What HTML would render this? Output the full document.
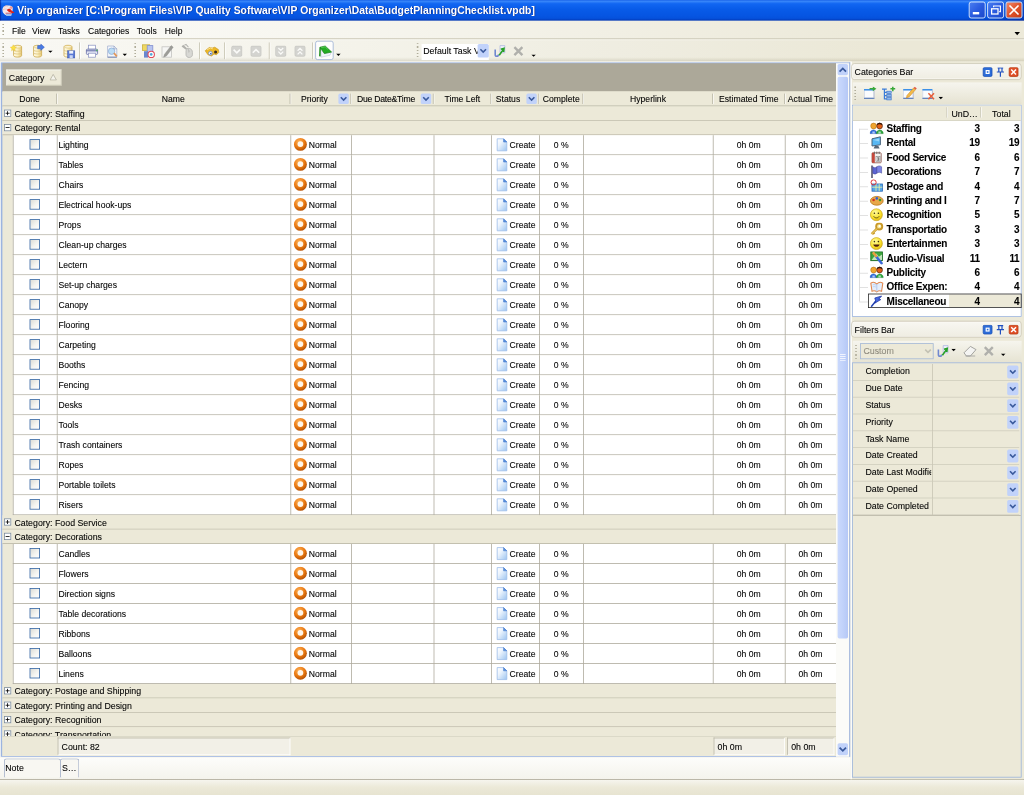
<!DOCTYPE html><html><head><meta charset="utf-8"><title>Vip organizer</title><style>
html,body{margin:0;padding:0;}
body{width:1024px;height:795px;overflow:hidden;background:#ece9d8;font-family:"Liberation Sans",sans-serif;}
#root{filter:blur(0.4px);-webkit-text-stroke:0.2px rgba(0,0,0,.5);position:absolute;left:0;top:0;width:1280px;height:994px;transform:scale(0.8);transform-origin:0 0;background:#ece9d8;font-size:11px;color:#000;overflow:hidden;}
.a{position:absolute;}
.t{position:absolute;white-space:nowrap;line-height:14px;height:14px;}
#title{left:0;top:0;width:1280px;height:26px;background:linear-gradient(to right,rgba(0,20,130,.55) 0,rgba(0,20,130,.5) 1px,rgba(0,0,0,0) 2px,rgba(0,0,0,0) 1240px,rgba(0,20,120,.35) 1280px),linear-gradient(to bottom,#1c66ea 0%,#3584f9 7%,#1166f2 18%,#085be8 45%,#0655e2 75%,#0551dc 88%,#0236b4 100%);}
#title .t{-webkit-text-stroke:0;left:21.500px;top:4px;font-weight:bold;font-size:13px;color:#fff;line-height:18px;height:18px;text-shadow:1px 1px 0 #0a2a8a;letter-spacing:0.02px;}
.wb{position:absolute;top:2px;width:19px;height:19px;border:1px solid #fff;border-radius:3px;background:linear-gradient(135deg,#4a7df0 0%,#2a5be0 50%,#1c48c8 100%);}
.wb.c{background:linear-gradient(135deg,#f08a6a 0%,#e0532c 50%,#c43a14 100%);}
#menu{left:0;top:26px;width:1280px;height:22.500px;background:linear-gradient(to right,#fbfbf8 0%,#f6f5ee 35%,#f1efe4 60%,#ece9d9 85%);border-bottom:1px solid #c5c2b2;box-sizing:border-box;}
#menu .t{top:4.500px;font-size:10.700px;}
#tb{left:0;top:48.500px;width:1280px;height:28.500px;background:linear-gradient(to bottom,rgba(255,255,255,.6) 0,rgba(255,255,255,0) 2px,rgba(0,0,0,0) 80%,rgba(120,110,70,.12) 93%,rgba(120,110,70,.22) 100%),linear-gradient(to right,#f9f8f4 0%,#f4f3ea 35%,#efede1 60%,#ebe8d7 85%);}
.grip{position:absolute;width:2px;background:repeating-linear-gradient(to bottom,#b0ad9a 0,#b0ad9a 1.5px,transparent 1.5px,transparent 4px);}
.sep{position:absolute;width:1px;background:#c5c2b0;box-shadow:1px 0 0 #fff;}
.row{position:absolute;left:16px;width:1029px;height:25px;background:#fff;}
.row i{position:absolute;top:0;width:1px;height:25px;background:#aeab9d;}
.row b{position:absolute;left:0;right:0;bottom:0;height:1px;background:#aeab9d;}
.row .t{top:5px;font-weight:normal;font-size:10.800px;}
.cb{position:absolute;left:21px;top:5px;width:11px;height:11px;border:1px solid #2f62a0;background:linear-gradient(135deg,#dcdcd6 0%,#f4f4f0 55%,#fff 100%);}
.pi{position:absolute;left:350.500px;top:3px;width:17px;height:17px;}
.si{position:absolute;left:603.500px;top:3px;width:15px;height:18px;}
.grp{position:absolute;left:3px;width:1042px;height:18px;background:#ece9d8;border-bottom:1px solid #b9b6a6;box-sizing:border-box;}
.grp .t{left:15px;top:2px;}
.pm{position:absolute;left:1.700px;top:4px;width:7px;height:7px;border:1px solid #7b8a99;background:#fff;}
.pm:before{content:"";position:absolute;left:1px;top:3px;width:5px;height:1px;background:#000;}
.pm.p:after{content:"";position:absolute;left:3px;top:1px;width:1px;height:5px;background:#000;}
.hd{position:absolute;left:3px;top:114px;width:1042px;height:19px;background:#ece9d8;border-bottom:1px solid #aaa798;box-sizing:border-box;}
.hd .t{top:3px;font-size:10.800px;}
.hd i{position:absolute;top:3px;width:1px;height:13px;background:#bab7a6;box-shadow:1px 0 0 #fff;}
.fb{position:absolute;top:3px;width:13px;height:13px;background:#c1d2fa;border-radius:2px;}
.fb svg,.cbx svg{position:absolute;left:0;top:0;}
.cbx{position:absolute;width:14px;height:17px;background:#c1d2fa;border-radius:2px;}
.ptitle{position:absolute;left:1065.500px;width:212.500px;height:21px;border:1px solid #cbc8b7;border-radius:4px;background:linear-gradient(to bottom,#f8f7f2,#efede2);box-sizing:border-box;box-shadow:inset 0 0 0 1px #fbfaf6;}
.ptitle .t{left:3px;top:3.200px;}
.cat{position:absolute;left:0;width:208px;height:18px;}
.cat .t{font-weight:bold;font-size:12.5px;top:2px;line-height:15px;letter-spacing:-0.35px;}
.cat .n{left:42.500px;}
.cat .u{right:49px;}
.cat .o{right:-0.500px;}
.cat svg{position:absolute;left:21px;top:0.500px;}
.cat em{position:absolute;left:8px;top:9px;width:11px;height:1px;background:#dadada;}
.fr{position:absolute;left:0;width:208px;height:21px;border-bottom:1px solid #d0cdbd;box-sizing:border-box;}
.fr .t{left:16px;top:2.600px;}
.fr i{position:absolute;left:99px;top:0;width:1px;height:21px;background:#c8c5b4;}
</style></head><body><div id="root"><div id="title" class="a"><div class="t">Vip organizer [C:\Program Files\VIP Quality Software\VIP Organizer\Data\BudgetPlanningChecklist.vpdb]</div><svg class="a" style="left:2px;top:4px" width="18" height="18" viewBox="0 0 18 18"><path d="M1 8c0-4 4-6 7-5 3-1 6 1 6 4l-1 6c-2 3-7 3-9 1-2-1-3-3-3-6z" fill="#f2e6ea"/><path d="M3 5c2-2 4-2 5-1M2 8c2-1 4-1 5 0" stroke="#e8b8b8" stroke-width="1" fill="none"/><path d="M5 13h8l-1 3H6z" fill="#9cc0f0"/><path d="M5 12.500h8" stroke="#d04848" stroke-width="1"/><path d="M6.500 8.500c2-2.500 4.500-2 6 0.500l3.500 2.500c-1.500 1-3 1-4.500 0-2 0-3.500-1-5-3z" fill="#e02418"/><circle cx="12" cy="5.500" r="1.800" fill="#f09898"/></svg><div class="wb" style="left:1211px"><div class="a" style="left:4px;top:12px;width:8px;height:3px;background:#fff"></div></div><div class="wb" style="left:1234px"><svg width="19" height="19" viewBox="0 0 19 19"><rect x="4.5" y="8" width="8" height="6.5" fill="none" stroke="#fff" stroke-width="1.6"/><path d="M7 6V4.5h8.5v7H14" fill="none" stroke="#fff" stroke-width="1.4"/></svg></div><div class="wb c" style="left:1257px"><svg width="19" height="19" viewBox="0 0 19 19"><path d="M4.5 4.5l10 10M14.5 4.5l-10 10" stroke="#fff" stroke-width="2.2" stroke-linecap="round"/></svg></div></div><div id="menu" class="a"><div class="grip" style="left:3px;top:4px;height:14px"></div><div class="t" style="left:15px">File</div><div class="t" style="left:40px">View</div><div class="t" style="left:72.5px">Tasks</div><div class="t" style="left:110px">Categories</div><div class="t" style="left:171px">Tools</div><div class="t" style="left:206px">Help</div><svg class="a" style="left:1268px;top:13.500px" width="8" height="5"><path d="M0 0h7L3.5 4z" fill="#000"/></svg></div><div id="tb" class="a"><div class="grip" style="left:3px;top:5px;height:19px"></div><svg class="a" style="left:12px;top:5px" width="20" height="20" viewBox="0 0 20 20"><path d="M5 4.500c0-2.500 10-2.500 10 0v11c0 2.500-10 2.500-10 0z" fill="url(#dbg)" stroke="#cfae56" stroke-width="1.100"/><path d="M5 8.500c0 2 10 2 10 0M5 12c0 2 10 2 10 0" fill="none" stroke="#dcc27a" stroke-width="1"/><ellipse cx="10" cy="4.500" rx="4.500" ry="1.600" fill="#fdf6d8" stroke="#d8b860" stroke-width="0.700"/><path d="M1 5l2.500-0.500 1-2.500 1.500 2.500 2.500 0.500-2 1.800 0.500 2.700-2.500-1.500-2 1.500 0.300-2.700z" fill="#fbe24a" stroke="#e8c020" stroke-width="0.500"/></svg><svg class="a" style="left:37px;top:5px" width="20" height="20" viewBox="0 0 20 20"><path d="M5 4.500c0-2.500 10-2.500 10 0v11c0 2.500-10 2.500-10 0z" fill="url(#dbg)" stroke="#cfae56" stroke-width="1.100"/><path d="M5 8.500c0 2 10 2 10 0M5 12c0 2 10 2 10 0" fill="none" stroke="#dcc27a" stroke-width="1"/><ellipse cx="10" cy="4.500" rx="4.500" ry="1.600" fill="#fdf6d8" stroke="#d8b860" stroke-width="0.700"/><path d="M10 3h4V1l4.500 4-4.500 4V7h-4z" fill="#4a7ae4" stroke="#2c58c0" stroke-width="0.600"/></svg><svg class="a" style="left:60px;top:14px" width="7" height="4"><path d="M0 0h6L3 3z" fill="#000"/></svg><svg class="a" style="left:75px;top:5px" width="20" height="20" viewBox="0 0 20 20"><path d="M5 4.500c0-2.500 10-2.500 10 0v11c0 2.500-10 2.500-10 0z" fill="url(#dbg)" stroke="#cfae56" stroke-width="1.100"/><path d="M5 8.500c0 2 10 2 10 0M5 12c0 2 10 2 10 0" fill="none" stroke="#dcc27a" stroke-width="1"/><ellipse cx="10" cy="4.500" rx="4.500" ry="1.600" fill="#fdf6d8" stroke="#d8b860" stroke-width="0.700"/><rect x="9.500" y="9.500" width="9" height="9" fill="#5878d4" stroke="#3450a8" stroke-width="0.600"/><rect x="11.500" y="9.500" width="5" height="3.500" fill="#eef2fc"/><rect x="12" y="15" width="4" height="3.500" fill="#c8d4f4"/></svg><div class="sep" style="left:99px;top:4px;height:21px"></div><svg class="a" style="left:105px;top:5px" width="20" height="20" viewBox="0 0 20 20"><rect x="5.500" y="2.500" width="9" height="5" fill="#fff" stroke="#8890c0" stroke-width="0.900"/><rect x="3" y="7.500" width="14" height="6.500" rx="1" fill="#e4e8f6" stroke="#6870a8"/><path d="M3 9.500h14" stroke="#5860a0" stroke-width="1.200"/><rect x="5.500" y="12.500" width="9" height="5" fill="#fff" stroke="#8890c0" stroke-width="0.900"/><rect x="15" y="8" width="2" height="2" fill="#58b068"/></svg><svg class="a" style="left:130px;top:5px" width="20" height="20" viewBox="0 0 20 20"><path d="M4.500 3.500h8l3.500 3.500v10.500h-11.500z" fill="#f4f7fc" stroke="#a8b4d0"/><path d="M4.500 17.500h11.500" stroke="#7888b0" stroke-width="1.200"/><circle cx="9.500" cy="10" r="4" fill="#bcdcf4" stroke="#90b0d8"/><path d="M12.500 12.500l3.500 4" stroke="#e49858" stroke-width="2.200"/><path d="M12.500 3.500v3.500h3.500" fill="none" stroke="#8898c0" stroke-width="0.800"/></svg><svg class="a" style="left:153px;top:18px" width="7" height="4"><path d="M0 0h6L3 3z" fill="#000"/></svg><div class="grip" style="left:168px;top:5px;height:19px"></div><svg class="a" style="left:175px;top:5px" width="22" height="20" viewBox="0 0 22 20"><rect x="3" y="2" width="9" height="7" fill="#f0d860" stroke="#c8b040"/><rect x="9" y="3" width="7" height="9" fill="#b8c4f0" stroke="#8090d0"/><rect x="5" y="10" width="5" height="8" fill="#6888d0"/><circle cx="14" cy="14" r="4" fill="#fff" stroke="#e04858" stroke-width="1.3"/><circle cx="14" cy="14" r="1.6" fill="#50a8d8"/></svg><svg class="a" style="left:199px;top:5px" width="20" height="20" viewBox="0 0 20 20"><rect x="3.500" y="4.500" width="12" height="13" fill="#f6f6f4" stroke="#c4c4c0"/><path d="M6.500 14l8.500-11 2.500 2-8.500 11-3.500 1.500z" fill="#9c9c98" stroke="#8a8a86" stroke-width="0.500"/></svg><svg class="a" style="left:224px;top:5px" width="20" height="20" viewBox="0 0 20 20"><path d="M8.500 10c0-3 2-4 4-3.500 2.500 0.500 4 2 4 5v3c0 4.500-8 4.500-8 0z" fill="#d8d8d4" stroke="#b4b4b0"/><path d="M11 7.500c1 1 1.500 2.500 1 4" fill="none" stroke="#a8a8a4"/><path d="M3 4l2-2 5 4.500-2 1.500z" fill="#b0b0ac"/><path d="M6.500 2.500l2-1 3 3.500" fill="none" stroke="#b4b4b0" stroke-width="1.300"/></svg><div class="sep" style="left:249px;top:4px;height:21px"></div><svg class="a" style="left:255px;top:6px" width="20" height="18" viewBox="0 0 20 18"><path d="M1.500 8.500l5-4 4 0.500 3-1 4.500 3 0.500 3.500-3 3-3-1-3 2.500-4.500-1.500z" fill="#ecb828" stroke="#c89418" stroke-width="0.800"/><path d="M4 7l4-2 3 1" fill="none" stroke="#fbe49a" stroke-width="1.200"/><circle cx="8" cy="11.500" r="2.300" fill="#fff" stroke="#6888c8"/><circle cx="8.500" cy="12" r="1" fill="#4060a8"/><circle cx="14.500" cy="10" r="1.900" fill="#3a2c1c"/></svg><div class="sep" style="left:280px;top:4px;height:21px"></div><svg class="a" style="left:289px;top:8px" width="14" height="14" viewBox="0 0 14 14"><rect x="0.500" y="0.500" width="13" height="13" rx="2" fill="#d4d4d0" stroke="#c6c6c2"/><path d="M3 5l4 4 4-4" fill="none" stroke="#fafaf8" stroke-width="2"/></svg><svg class="a" style="left:313px;top:8px" width="14" height="14" viewBox="0 0 14 14"><rect x="0.500" y="0.500" width="13" height="13" rx="2" fill="#d4d4d0" stroke="#c6c6c2"/><path d="M3 9l4-4 4 4" fill="none" stroke="#fafaf8" stroke-width="2"/></svg><div class="sep" style="left:336px;top:4px;height:21px"></div><svg class="a" style="left:344px;top:8px" width="14" height="14" viewBox="0 0 14 14"><rect x="0.500" y="0.500" width="13" height="13" rx="2" fill="#d4d4d0" stroke="#c6c6c2"/><path d="M4 3l3 3 3-3M4 7.5l3 3 3-3" fill="none" stroke="#fafaf8" stroke-width="1.6"/></svg><svg class="a" style="left:368px;top:8px" width="14" height="14" viewBox="0 0 14 14"><rect x="0.500" y="0.500" width="13" height="13" rx="2" fill="#d4d4d0" stroke="#c6c6c2"/><path d="M4 6.5l3-3 3 3M4 11l3-3 3 3" fill="none" stroke="#fafaf8" stroke-width="1.6"/></svg><div class="sep" style="left:390px;top:4px;height:21px;left:390px"></div><div class="a" style="left:394px;top:2px;width:23px;height:24px;border:1px solid #9cb0d4;border-radius:3px;background:#fdfdfc;box-sizing:border-box"></div><svg class="a" style="left:396px;top:5px" width="20" height="20" viewBox="0 0 20 20"><path d="M5 8L9.500 13 18 11.200 16.500 15 5.500 17.500z" fill="#f2f4fb" stroke="#b4bcd4" stroke-width="0.600"/><path d="M4.200 5L3.800 16.500" stroke="#168a16" stroke-width="1.800"/><path d="M4 5l6.500-1.500 8 7.500-9 2z" fill="#24ac24" stroke="#0e7a0e" stroke-width="0.800"/><path d="M5.500 5.500l5-1 3 3" fill="none" stroke="#6cd46c" stroke-width="0.900"/></svg><svg class="a" style="left:420px;top:18px" width="7" height="4"><path d="M0 0h6L3 3z" fill="#000"/></svg><div class="grip" style="left:520.500px;top:5px;height:19px;width:2px"></div><div class="a" style="left:527px;top:6.500px;width:84px;height:19.500px;background:#fff"></div><div class="t" style="left:529px;top:8px">Default Task V</div><div class="cbx" style="left:597px;top:6px"><svg width="14" height="17"><path d="M3.5 6.5l3.5 3.5 3.5-3.5" fill="none" stroke="#3a5a9c" stroke-width="2"/></svg></div><svg class="a" style="left:616px;top:5px" width="20" height="20" viewBox="0 0 20 20"><path d="M9 3h6v9H9z" fill="#eef0fa" stroke="#b0b8e0"/><path d="M3 8v6c0 3 4 3 4 0" fill="none" stroke="#7088d0" stroke-width="2"/><path d="M8 15l5-7M10 7.5l4-1-0.5 4.5" fill="none" stroke="#28a028" stroke-width="2"/></svg><svg class="a" style="left:640px;top:7px" width="16" height="16" viewBox="0 0 16 16"><path d="M3 3l10 10M13 3L3 13" stroke="#b0b0ac" stroke-width="3"/></svg><svg class="a" style="left:663.500px;top:19px" width="7" height="4"><path d="M0 0h6L3 3z" fill="#000"/></svg></div><div class="a" style="left:0;top:77px;width:1064px;height:870px;background:#fbfbf8"></div><div class="a" style="left:1.400px;top:77.500px;width:1062px;height:868.500px;background:#9cb4e0"></div><div class="a" style="left:2.500px;top:79px;width:1042.500px;height:35.500px;background:#aca899"></div><div class="a" style="left:7.500px;top:87px;width:69px;height:20px;background:#ece9d8;border:1px solid #f8f7f2;border-right-color:#c8c5b4;border-bottom-color:#c8c5b4;box-sizing:border-box"><div class="t" style="left:2.500px;top:2px">Category</div><svg class="a" style="left:53px;top:4px" width="10" height="9"><path d="M4.5 1L8.5 8h-8z" fill="#f4f3ec" stroke="#b4b1a2"/></svg></div><div class="a" style="left:2.500px;top:115px;width:1042.500px;height:830px;background:#ece9d8"></div><div class="hd"><i style="left:67.0px"></i><i style="left:359.0px"></i><i style="left:434.5px"></i><i style="left:537.5px"></i><i style="left:609.5px"></i><i style="left:669.5px"></i><i style="left:724.5px"></i><i style="left:887.0px"></i><i style="left:977.0px"></i><div class="t" style="left:0px;width:68px;text-align:center">Done</div><div class="t" style="left:68px;width:291px;text-align:center">Name</div><div class="t" style="left:359px;width:62px;text-align:center">Priority</div><div class="fb" style="left:420px"><svg width="13" height="13"><path d="M3 4.5l3.5 3.5 3.5-3.5" fill="none" stroke="#3a5a9c" stroke-width="2"/></svg></div><div class="t" style="left:436px;width:87px;text-align:center"><span style="letter-spacing:-0.300px">Due Date&amp;Time</span></div><div class="fb" style="left:523px"><svg width="13" height="13"><path d="M3 4.5l3.5 3.5 3.5-3.5" fill="none" stroke="#3a5a9c" stroke-width="2"/></svg></div><div class="t" style="left:539px;width:72px;text-align:center">Time Left</div><div class="t" style="left:611px;width:42px;text-align:center">Status</div><div class="fb" style="left:655px"><svg width="13" height="13"><path d="M3 4.5l3.5 3.5 3.5-3.5" fill="none" stroke="#3a5a9c" stroke-width="2"/></svg></div><div class="t" style="left:671px;width:55px;text-align:center">Complete</div><div class="t" style="left:726px;width:162px;text-align:center">Hyperlink</div><div class="t" style="left:888px;width:90px;text-align:center">Estimated Time</div><div class="t" style="left:978px;width:64px;text-align:center">Actual Time</div></div><svg width="0" height="0" style="position:absolute"><defs><linearGradient id="dbg" x1="0" y1="0" x2="1" y2="0"><stop offset="0" stop-color="#fffdf0"/><stop offset="0.500" stop-color="#fbefc0"/><stop offset="1" stop-color="#e6c874"/></linearGradient><radialGradient id="smg" cx="0.400" cy="0.300" r="0.800"><stop offset="0" stop-color="#fffca0"/><stop offset="0.600" stop-color="#f8e028"/><stop offset="1" stop-color="#d8a810"/></radialGradient><radialGradient id="pg" cx="0.4" cy="0.3" r="0.75"><stop offset="0" stop-color="#ffb45c"/><stop offset="0.55" stop-color="#ea7a12"/><stop offset="1" stop-color="#b04c00"/></radialGradient><linearGradient id="sg" x1="0" y1="0" x2="1" y2="1"><stop offset="0" stop-color="#fff"/><stop offset="0.35" stop-color="#eef5fd"/><stop offset="1" stop-color="#9cc4f0"/></linearGradient></defs></svg><div class="grp" style="top:133px"><div class="pm p"></div><div class="t">Category: Staffing</div></div><div class="grp" style="top:151px"><div class="pm"></div><div class="t">Category: Rental</div></div><div class="row" style="top:169px"><i style="left:55.0px"></i><i style="left:347.0px"></i><i style="left:422.5px"></i><i style="left:525.5px"></i><i style="left:597.5px"></i><i style="left:657.5px"></i><i style="left:712.5px"></i><i style="left:875.0px"></i><i style="left:965.0px"></i><i style="left:0"></i><b></b><div class="cb"></div><div class="t" style="left:57px">Lighting</div><svg class="pi" viewBox="0 0 16 16"><circle cx="8" cy="8" r="7.6" fill="url(#pg)"/><circle cx="8" cy="7.6" r="3.4" fill="#fff6ea"/></svg><div class="t" style="left:370px">Normal</div><svg class="si" viewBox="0 0 15 18"><path d="M1.5 1.500h8l4 4v11h-12z" fill="url(#sg)" stroke="#9cbce8"/><path d="M9.500 1.500l4 4h-4z" fill="#5a90dc" stroke="#4a80d0" stroke-width="0.8"/></svg><div class="t" style="left:621px">Create</div><div class="t" style="left:658px;width:55px;text-align:center">0 %</div><div class="t" style="left:875px;width:90px;text-align:center">0h 0m</div><div class="t" style="left:965px;width:64px;text-align:center">0h 0m</div></div><div class="row" style="top:194px"><i style="left:55.0px"></i><i style="left:347.0px"></i><i style="left:422.5px"></i><i style="left:525.5px"></i><i style="left:597.5px"></i><i style="left:657.5px"></i><i style="left:712.5px"></i><i style="left:875.0px"></i><i style="left:965.0px"></i><i style="left:0"></i><b></b><div class="cb"></div><div class="t" style="left:57px">Tables</div><svg class="pi" viewBox="0 0 16 16"><circle cx="8" cy="8" r="7.6" fill="url(#pg)"/><circle cx="8" cy="7.6" r="3.4" fill="#fff6ea"/></svg><div class="t" style="left:370px">Normal</div><svg class="si" viewBox="0 0 15 18"><path d="M1.5 1.500h8l4 4v11h-12z" fill="url(#sg)" stroke="#9cbce8"/><path d="M9.500 1.500l4 4h-4z" fill="#5a90dc" stroke="#4a80d0" stroke-width="0.8"/></svg><div class="t" style="left:621px">Create</div><div class="t" style="left:658px;width:55px;text-align:center">0 %</div><div class="t" style="left:875px;width:90px;text-align:center">0h 0m</div><div class="t" style="left:965px;width:64px;text-align:center">0h 0m</div></div><div class="row" style="top:219px"><i style="left:55.0px"></i><i style="left:347.0px"></i><i style="left:422.5px"></i><i style="left:525.5px"></i><i style="left:597.5px"></i><i style="left:657.5px"></i><i style="left:712.5px"></i><i style="left:875.0px"></i><i style="left:965.0px"></i><i style="left:0"></i><b></b><div class="cb"></div><div class="t" style="left:57px">Chairs</div><svg class="pi" viewBox="0 0 16 16"><circle cx="8" cy="8" r="7.6" fill="url(#pg)"/><circle cx="8" cy="7.6" r="3.4" fill="#fff6ea"/></svg><div class="t" style="left:370px">Normal</div><svg class="si" viewBox="0 0 15 18"><path d="M1.5 1.500h8l4 4v11h-12z" fill="url(#sg)" stroke="#9cbce8"/><path d="M9.500 1.500l4 4h-4z" fill="#5a90dc" stroke="#4a80d0" stroke-width="0.8"/></svg><div class="t" style="left:621px">Create</div><div class="t" style="left:658px;width:55px;text-align:center">0 %</div><div class="t" style="left:875px;width:90px;text-align:center">0h 0m</div><div class="t" style="left:965px;width:64px;text-align:center">0h 0m</div></div><div class="row" style="top:244px"><i style="left:55.0px"></i><i style="left:347.0px"></i><i style="left:422.5px"></i><i style="left:525.5px"></i><i style="left:597.5px"></i><i style="left:657.5px"></i><i style="left:712.5px"></i><i style="left:875.0px"></i><i style="left:965.0px"></i><i style="left:0"></i><b></b><div class="cb"></div><div class="t" style="left:57px">Electrical hook-ups</div><svg class="pi" viewBox="0 0 16 16"><circle cx="8" cy="8" r="7.6" fill="url(#pg)"/><circle cx="8" cy="7.6" r="3.4" fill="#fff6ea"/></svg><div class="t" style="left:370px">Normal</div><svg class="si" viewBox="0 0 15 18"><path d="M1.5 1.500h8l4 4v11h-12z" fill="url(#sg)" stroke="#9cbce8"/><path d="M9.500 1.500l4 4h-4z" fill="#5a90dc" stroke="#4a80d0" stroke-width="0.8"/></svg><div class="t" style="left:621px">Create</div><div class="t" style="left:658px;width:55px;text-align:center">0 %</div><div class="t" style="left:875px;width:90px;text-align:center">0h 0m</div><div class="t" style="left:965px;width:64px;text-align:center">0h 0m</div></div><div class="row" style="top:269px"><i style="left:55.0px"></i><i style="left:347.0px"></i><i style="left:422.5px"></i><i style="left:525.5px"></i><i style="left:597.5px"></i><i style="left:657.5px"></i><i style="left:712.5px"></i><i style="left:875.0px"></i><i style="left:965.0px"></i><i style="left:0"></i><b></b><div class="cb"></div><div class="t" style="left:57px">Props</div><svg class="pi" viewBox="0 0 16 16"><circle cx="8" cy="8" r="7.6" fill="url(#pg)"/><circle cx="8" cy="7.6" r="3.4" fill="#fff6ea"/></svg><div class="t" style="left:370px">Normal</div><svg class="si" viewBox="0 0 15 18"><path d="M1.5 1.500h8l4 4v11h-12z" fill="url(#sg)" stroke="#9cbce8"/><path d="M9.500 1.500l4 4h-4z" fill="#5a90dc" stroke="#4a80d0" stroke-width="0.8"/></svg><div class="t" style="left:621px">Create</div><div class="t" style="left:658px;width:55px;text-align:center">0 %</div><div class="t" style="left:875px;width:90px;text-align:center">0h 0m</div><div class="t" style="left:965px;width:64px;text-align:center">0h 0m</div></div><div class="row" style="top:294px"><i style="left:55.0px"></i><i style="left:347.0px"></i><i style="left:422.5px"></i><i style="left:525.5px"></i><i style="left:597.5px"></i><i style="left:657.5px"></i><i style="left:712.5px"></i><i style="left:875.0px"></i><i style="left:965.0px"></i><i style="left:0"></i><b></b><div class="cb"></div><div class="t" style="left:57px">Clean-up charges</div><svg class="pi" viewBox="0 0 16 16"><circle cx="8" cy="8" r="7.6" fill="url(#pg)"/><circle cx="8" cy="7.6" r="3.4" fill="#fff6ea"/></svg><div class="t" style="left:370px">Normal</div><svg class="si" viewBox="0 0 15 18"><path d="M1.5 1.500h8l4 4v11h-12z" fill="url(#sg)" stroke="#9cbce8"/><path d="M9.500 1.500l4 4h-4z" fill="#5a90dc" stroke="#4a80d0" stroke-width="0.8"/></svg><div class="t" style="left:621px">Create</div><div class="t" style="left:658px;width:55px;text-align:center">0 %</div><div class="t" style="left:875px;width:90px;text-align:center">0h 0m</div><div class="t" style="left:965px;width:64px;text-align:center">0h 0m</div></div><div class="row" style="top:319px"><i style="left:55.0px"></i><i style="left:347.0px"></i><i style="left:422.5px"></i><i style="left:525.5px"></i><i style="left:597.5px"></i><i style="left:657.5px"></i><i style="left:712.5px"></i><i style="left:875.0px"></i><i style="left:965.0px"></i><i style="left:0"></i><b></b><div class="cb"></div><div class="t" style="left:57px">Lectern</div><svg class="pi" viewBox="0 0 16 16"><circle cx="8" cy="8" r="7.6" fill="url(#pg)"/><circle cx="8" cy="7.6" r="3.4" fill="#fff6ea"/></svg><div class="t" style="left:370px">Normal</div><svg class="si" viewBox="0 0 15 18"><path d="M1.5 1.500h8l4 4v11h-12z" fill="url(#sg)" stroke="#9cbce8"/><path d="M9.500 1.500l4 4h-4z" fill="#5a90dc" stroke="#4a80d0" stroke-width="0.8"/></svg><div class="t" style="left:621px">Create</div><div class="t" style="left:658px;width:55px;text-align:center">0 %</div><div class="t" style="left:875px;width:90px;text-align:center">0h 0m</div><div class="t" style="left:965px;width:64px;text-align:center">0h 0m</div></div><div class="row" style="top:344px"><i style="left:55.0px"></i><i style="left:347.0px"></i><i style="left:422.5px"></i><i style="left:525.5px"></i><i style="left:597.5px"></i><i style="left:657.5px"></i><i style="left:712.5px"></i><i style="left:875.0px"></i><i style="left:965.0px"></i><i style="left:0"></i><b></b><div class="cb"></div><div class="t" style="left:57px">Set-up charges</div><svg class="pi" viewBox="0 0 16 16"><circle cx="8" cy="8" r="7.6" fill="url(#pg)"/><circle cx="8" cy="7.6" r="3.4" fill="#fff6ea"/></svg><div class="t" style="left:370px">Normal</div><svg class="si" viewBox="0 0 15 18"><path d="M1.5 1.500h8l4 4v11h-12z" fill="url(#sg)" stroke="#9cbce8"/><path d="M9.500 1.500l4 4h-4z" fill="#5a90dc" stroke="#4a80d0" stroke-width="0.8"/></svg><div class="t" style="left:621px">Create</div><div class="t" style="left:658px;width:55px;text-align:center">0 %</div><div class="t" style="left:875px;width:90px;text-align:center">0h 0m</div><div class="t" style="left:965px;width:64px;text-align:center">0h 0m</div></div><div class="row" style="top:369px"><i style="left:55.0px"></i><i style="left:347.0px"></i><i style="left:422.5px"></i><i style="left:525.5px"></i><i style="left:597.5px"></i><i style="left:657.5px"></i><i style="left:712.5px"></i><i style="left:875.0px"></i><i style="left:965.0px"></i><i style="left:0"></i><b></b><div class="cb"></div><div class="t" style="left:57px">Canopy</div><svg class="pi" viewBox="0 0 16 16"><circle cx="8" cy="8" r="7.6" fill="url(#pg)"/><circle cx="8" cy="7.6" r="3.4" fill="#fff6ea"/></svg><div class="t" style="left:370px">Normal</div><svg class="si" viewBox="0 0 15 18"><path d="M1.5 1.500h8l4 4v11h-12z" fill="url(#sg)" stroke="#9cbce8"/><path d="M9.500 1.500l4 4h-4z" fill="#5a90dc" stroke="#4a80d0" stroke-width="0.8"/></svg><div class="t" style="left:621px">Create</div><div class="t" style="left:658px;width:55px;text-align:center">0 %</div><div class="t" style="left:875px;width:90px;text-align:center">0h 0m</div><div class="t" style="left:965px;width:64px;text-align:center">0h 0m</div></div><div class="row" style="top:394px"><i style="left:55.0px"></i><i style="left:347.0px"></i><i style="left:422.5px"></i><i style="left:525.5px"></i><i style="left:597.5px"></i><i style="left:657.5px"></i><i style="left:712.5px"></i><i style="left:875.0px"></i><i style="left:965.0px"></i><i style="left:0"></i><b></b><div class="cb"></div><div class="t" style="left:57px">Flooring</div><svg class="pi" viewBox="0 0 16 16"><circle cx="8" cy="8" r="7.6" fill="url(#pg)"/><circle cx="8" cy="7.6" r="3.4" fill="#fff6ea"/></svg><div class="t" style="left:370px">Normal</div><svg class="si" viewBox="0 0 15 18"><path d="M1.5 1.500h8l4 4v11h-12z" fill="url(#sg)" stroke="#9cbce8"/><path d="M9.500 1.500l4 4h-4z" fill="#5a90dc" stroke="#4a80d0" stroke-width="0.8"/></svg><div class="t" style="left:621px">Create</div><div class="t" style="left:658px;width:55px;text-align:center">0 %</div><div class="t" style="left:875px;width:90px;text-align:center">0h 0m</div><div class="t" style="left:965px;width:64px;text-align:center">0h 0m</div></div><div class="row" style="top:419px"><i style="left:55.0px"></i><i style="left:347.0px"></i><i style="left:422.5px"></i><i style="left:525.5px"></i><i style="left:597.5px"></i><i style="left:657.5px"></i><i style="left:712.5px"></i><i style="left:875.0px"></i><i style="left:965.0px"></i><i style="left:0"></i><b></b><div class="cb"></div><div class="t" style="left:57px">Carpeting</div><svg class="pi" viewBox="0 0 16 16"><circle cx="8" cy="8" r="7.6" fill="url(#pg)"/><circle cx="8" cy="7.6" r="3.4" fill="#fff6ea"/></svg><div class="t" style="left:370px">Normal</div><svg class="si" viewBox="0 0 15 18"><path d="M1.5 1.500h8l4 4v11h-12z" fill="url(#sg)" stroke="#9cbce8"/><path d="M9.500 1.500l4 4h-4z" fill="#5a90dc" stroke="#4a80d0" stroke-width="0.8"/></svg><div class="t" style="left:621px">Create</div><div class="t" style="left:658px;width:55px;text-align:center">0 %</div><div class="t" style="left:875px;width:90px;text-align:center">0h 0m</div><div class="t" style="left:965px;width:64px;text-align:center">0h 0m</div></div><div class="row" style="top:444px"><i style="left:55.0px"></i><i style="left:347.0px"></i><i style="left:422.5px"></i><i style="left:525.5px"></i><i style="left:597.5px"></i><i style="left:657.5px"></i><i style="left:712.5px"></i><i style="left:875.0px"></i><i style="left:965.0px"></i><i style="left:0"></i><b></b><div class="cb"></div><div class="t" style="left:57px">Booths</div><svg class="pi" viewBox="0 0 16 16"><circle cx="8" cy="8" r="7.6" fill="url(#pg)"/><circle cx="8" cy="7.6" r="3.4" fill="#fff6ea"/></svg><div class="t" style="left:370px">Normal</div><svg class="si" viewBox="0 0 15 18"><path d="M1.5 1.500h8l4 4v11h-12z" fill="url(#sg)" stroke="#9cbce8"/><path d="M9.500 1.500l4 4h-4z" fill="#5a90dc" stroke="#4a80d0" stroke-width="0.8"/></svg><div class="t" style="left:621px">Create</div><div class="t" style="left:658px;width:55px;text-align:center">0 %</div><div class="t" style="left:875px;width:90px;text-align:center">0h 0m</div><div class="t" style="left:965px;width:64px;text-align:center">0h 0m</div></div><div class="row" style="top:469px"><i style="left:55.0px"></i><i style="left:347.0px"></i><i style="left:422.5px"></i><i style="left:525.5px"></i><i style="left:597.5px"></i><i style="left:657.5px"></i><i style="left:712.5px"></i><i style="left:875.0px"></i><i style="left:965.0px"></i><i style="left:0"></i><b></b><div class="cb"></div><div class="t" style="left:57px">Fencing</div><svg class="pi" viewBox="0 0 16 16"><circle cx="8" cy="8" r="7.6" fill="url(#pg)"/><circle cx="8" cy="7.6" r="3.4" fill="#fff6ea"/></svg><div class="t" style="left:370px">Normal</div><svg class="si" viewBox="0 0 15 18"><path d="M1.5 1.500h8l4 4v11h-12z" fill="url(#sg)" stroke="#9cbce8"/><path d="M9.500 1.500l4 4h-4z" fill="#5a90dc" stroke="#4a80d0" stroke-width="0.8"/></svg><div class="t" style="left:621px">Create</div><div class="t" style="left:658px;width:55px;text-align:center">0 %</div><div class="t" style="left:875px;width:90px;text-align:center">0h 0m</div><div class="t" style="left:965px;width:64px;text-align:center">0h 0m</div></div><div class="row" style="top:494px"><i style="left:55.0px"></i><i style="left:347.0px"></i><i style="left:422.5px"></i><i style="left:525.5px"></i><i style="left:597.5px"></i><i style="left:657.5px"></i><i style="left:712.5px"></i><i style="left:875.0px"></i><i style="left:965.0px"></i><i style="left:0"></i><b></b><div class="cb"></div><div class="t" style="left:57px">Desks</div><svg class="pi" viewBox="0 0 16 16"><circle cx="8" cy="8" r="7.6" fill="url(#pg)"/><circle cx="8" cy="7.6" r="3.4" fill="#fff6ea"/></svg><div class="t" style="left:370px">Normal</div><svg class="si" viewBox="0 0 15 18"><path d="M1.5 1.500h8l4 4v11h-12z" fill="url(#sg)" stroke="#9cbce8"/><path d="M9.500 1.500l4 4h-4z" fill="#5a90dc" stroke="#4a80d0" stroke-width="0.8"/></svg><div class="t" style="left:621px">Create</div><div class="t" style="left:658px;width:55px;text-align:center">0 %</div><div class="t" style="left:875px;width:90px;text-align:center">0h 0m</div><div class="t" style="left:965px;width:64px;text-align:center">0h 0m</div></div><div class="row" style="top:519px"><i style="left:55.0px"></i><i style="left:347.0px"></i><i style="left:422.5px"></i><i style="left:525.5px"></i><i style="left:597.5px"></i><i style="left:657.5px"></i><i style="left:712.5px"></i><i style="left:875.0px"></i><i style="left:965.0px"></i><i style="left:0"></i><b></b><div class="cb"></div><div class="t" style="left:57px">Tools</div><svg class="pi" viewBox="0 0 16 16"><circle cx="8" cy="8" r="7.6" fill="url(#pg)"/><circle cx="8" cy="7.6" r="3.4" fill="#fff6ea"/></svg><div class="t" style="left:370px">Normal</div><svg class="si" viewBox="0 0 15 18"><path d="M1.5 1.500h8l4 4v11h-12z" fill="url(#sg)" stroke="#9cbce8"/><path d="M9.500 1.500l4 4h-4z" fill="#5a90dc" stroke="#4a80d0" stroke-width="0.8"/></svg><div class="t" style="left:621px">Create</div><div class="t" style="left:658px;width:55px;text-align:center">0 %</div><div class="t" style="left:875px;width:90px;text-align:center">0h 0m</div><div class="t" style="left:965px;width:64px;text-align:center">0h 0m</div></div><div class="row" style="top:544px"><i style="left:55.0px"></i><i style="left:347.0px"></i><i style="left:422.5px"></i><i style="left:525.5px"></i><i style="left:597.5px"></i><i style="left:657.5px"></i><i style="left:712.5px"></i><i style="left:875.0px"></i><i style="left:965.0px"></i><i style="left:0"></i><b></b><div class="cb"></div><div class="t" style="left:57px">Trash containers</div><svg class="pi" viewBox="0 0 16 16"><circle cx="8" cy="8" r="7.6" fill="url(#pg)"/><circle cx="8" cy="7.6" r="3.4" fill="#fff6ea"/></svg><div class="t" style="left:370px">Normal</div><svg class="si" viewBox="0 0 15 18"><path d="M1.5 1.500h8l4 4v11h-12z" fill="url(#sg)" stroke="#9cbce8"/><path d="M9.500 1.500l4 4h-4z" fill="#5a90dc" stroke="#4a80d0" stroke-width="0.8"/></svg><div class="t" style="left:621px">Create</div><div class="t" style="left:658px;width:55px;text-align:center">0 %</div><div class="t" style="left:875px;width:90px;text-align:center">0h 0m</div><div class="t" style="left:965px;width:64px;text-align:center">0h 0m</div></div><div class="row" style="top:569px"><i style="left:55.0px"></i><i style="left:347.0px"></i><i style="left:422.5px"></i><i style="left:525.5px"></i><i style="left:597.5px"></i><i style="left:657.5px"></i><i style="left:712.5px"></i><i style="left:875.0px"></i><i style="left:965.0px"></i><i style="left:0"></i><b></b><div class="cb"></div><div class="t" style="left:57px">Ropes</div><svg class="pi" viewBox="0 0 16 16"><circle cx="8" cy="8" r="7.6" fill="url(#pg)"/><circle cx="8" cy="7.6" r="3.4" fill="#fff6ea"/></svg><div class="t" style="left:370px">Normal</div><svg class="si" viewBox="0 0 15 18"><path d="M1.5 1.500h8l4 4v11h-12z" fill="url(#sg)" stroke="#9cbce8"/><path d="M9.500 1.500l4 4h-4z" fill="#5a90dc" stroke="#4a80d0" stroke-width="0.8"/></svg><div class="t" style="left:621px">Create</div><div class="t" style="left:658px;width:55px;text-align:center">0 %</div><div class="t" style="left:875px;width:90px;text-align:center">0h 0m</div><div class="t" style="left:965px;width:64px;text-align:center">0h 0m</div></div><div class="row" style="top:594px"><i style="left:55.0px"></i><i style="left:347.0px"></i><i style="left:422.5px"></i><i style="left:525.5px"></i><i style="left:597.5px"></i><i style="left:657.5px"></i><i style="left:712.5px"></i><i style="left:875.0px"></i><i style="left:965.0px"></i><i style="left:0"></i><b></b><div class="cb"></div><div class="t" style="left:57px">Portable toilets</div><svg class="pi" viewBox="0 0 16 16"><circle cx="8" cy="8" r="7.6" fill="url(#pg)"/><circle cx="8" cy="7.6" r="3.4" fill="#fff6ea"/></svg><div class="t" style="left:370px">Normal</div><svg class="si" viewBox="0 0 15 18"><path d="M1.5 1.500h8l4 4v11h-12z" fill="url(#sg)" stroke="#9cbce8"/><path d="M9.500 1.500l4 4h-4z" fill="#5a90dc" stroke="#4a80d0" stroke-width="0.8"/></svg><div class="t" style="left:621px">Create</div><div class="t" style="left:658px;width:55px;text-align:center">0 %</div><div class="t" style="left:875px;width:90px;text-align:center">0h 0m</div><div class="t" style="left:965px;width:64px;text-align:center">0h 0m</div></div><div class="row" style="top:619px"><i style="left:55.0px"></i><i style="left:347.0px"></i><i style="left:422.5px"></i><i style="left:525.5px"></i><i style="left:597.5px"></i><i style="left:657.5px"></i><i style="left:712.5px"></i><i style="left:875.0px"></i><i style="left:965.0px"></i><i style="left:0"></i><b></b><div class="cb"></div><div class="t" style="left:57px">Risers</div><svg class="pi" viewBox="0 0 16 16"><circle cx="8" cy="8" r="7.6" fill="url(#pg)"/><circle cx="8" cy="7.6" r="3.4" fill="#fff6ea"/></svg><div class="t" style="left:370px">Normal</div><svg class="si" viewBox="0 0 15 18"><path d="M1.5 1.500h8l4 4v11h-12z" fill="url(#sg)" stroke="#9cbce8"/><path d="M9.500 1.500l4 4h-4z" fill="#5a90dc" stroke="#4a80d0" stroke-width="0.8"/></svg><div class="t" style="left:621px">Create</div><div class="t" style="left:658px;width:55px;text-align:center">0 %</div><div class="t" style="left:875px;width:90px;text-align:center">0h 0m</div><div class="t" style="left:965px;width:64px;text-align:center">0h 0m</div></div><div class="grp" style="top:644px"><div class="pm p"></div><div class="t">Category: Food Service</div></div><div class="grp" style="top:662px"><div class="pm"></div><div class="t">Category: Decorations</div></div><div class="row" style="top:680px"><i style="left:55.0px"></i><i style="left:347.0px"></i><i style="left:422.5px"></i><i style="left:525.5px"></i><i style="left:597.5px"></i><i style="left:657.5px"></i><i style="left:712.5px"></i><i style="left:875.0px"></i><i style="left:965.0px"></i><i style="left:0"></i><b></b><div class="cb"></div><div class="t" style="left:57px">Candles</div><svg class="pi" viewBox="0 0 16 16"><circle cx="8" cy="8" r="7.6" fill="url(#pg)"/><circle cx="8" cy="7.6" r="3.4" fill="#fff6ea"/></svg><div class="t" style="left:370px">Normal</div><svg class="si" viewBox="0 0 15 18"><path d="M1.5 1.500h8l4 4v11h-12z" fill="url(#sg)" stroke="#9cbce8"/><path d="M9.500 1.500l4 4h-4z" fill="#5a90dc" stroke="#4a80d0" stroke-width="0.8"/></svg><div class="t" style="left:621px">Create</div><div class="t" style="left:658px;width:55px;text-align:center">0 %</div><div class="t" style="left:875px;width:90px;text-align:center">0h 0m</div><div class="t" style="left:965px;width:64px;text-align:center">0h 0m</div></div><div class="row" style="top:705px"><i style="left:55.0px"></i><i style="left:347.0px"></i><i style="left:422.5px"></i><i style="left:525.5px"></i><i style="left:597.5px"></i><i style="left:657.5px"></i><i style="left:712.5px"></i><i style="left:875.0px"></i><i style="left:965.0px"></i><i style="left:0"></i><b></b><div class="cb"></div><div class="t" style="left:57px">Flowers</div><svg class="pi" viewBox="0 0 16 16"><circle cx="8" cy="8" r="7.6" fill="url(#pg)"/><circle cx="8" cy="7.6" r="3.4" fill="#fff6ea"/></svg><div class="t" style="left:370px">Normal</div><svg class="si" viewBox="0 0 15 18"><path d="M1.5 1.500h8l4 4v11h-12z" fill="url(#sg)" stroke="#9cbce8"/><path d="M9.500 1.500l4 4h-4z" fill="#5a90dc" stroke="#4a80d0" stroke-width="0.8"/></svg><div class="t" style="left:621px">Create</div><div class="t" style="left:658px;width:55px;text-align:center">0 %</div><div class="t" style="left:875px;width:90px;text-align:center">0h 0m</div><div class="t" style="left:965px;width:64px;text-align:center">0h 0m</div></div><div class="row" style="top:730px"><i style="left:55.0px"></i><i style="left:347.0px"></i><i style="left:422.5px"></i><i style="left:525.5px"></i><i style="left:597.5px"></i><i style="left:657.5px"></i><i style="left:712.5px"></i><i style="left:875.0px"></i><i style="left:965.0px"></i><i style="left:0"></i><b></b><div class="cb"></div><div class="t" style="left:57px">Direction signs</div><svg class="pi" viewBox="0 0 16 16"><circle cx="8" cy="8" r="7.6" fill="url(#pg)"/><circle cx="8" cy="7.6" r="3.4" fill="#fff6ea"/></svg><div class="t" style="left:370px">Normal</div><svg class="si" viewBox="0 0 15 18"><path d="M1.5 1.500h8l4 4v11h-12z" fill="url(#sg)" stroke="#9cbce8"/><path d="M9.500 1.500l4 4h-4z" fill="#5a90dc" stroke="#4a80d0" stroke-width="0.8"/></svg><div class="t" style="left:621px">Create</div><div class="t" style="left:658px;width:55px;text-align:center">0 %</div><div class="t" style="left:875px;width:90px;text-align:center">0h 0m</div><div class="t" style="left:965px;width:64px;text-align:center">0h 0m</div></div><div class="row" style="top:755px"><i style="left:55.0px"></i><i style="left:347.0px"></i><i style="left:422.5px"></i><i style="left:525.5px"></i><i style="left:597.5px"></i><i style="left:657.5px"></i><i style="left:712.5px"></i><i style="left:875.0px"></i><i style="left:965.0px"></i><i style="left:0"></i><b></b><div class="cb"></div><div class="t" style="left:57px">Table decorations</div><svg class="pi" viewBox="0 0 16 16"><circle cx="8" cy="8" r="7.6" fill="url(#pg)"/><circle cx="8" cy="7.6" r="3.4" fill="#fff6ea"/></svg><div class="t" style="left:370px">Normal</div><svg class="si" viewBox="0 0 15 18"><path d="M1.5 1.500h8l4 4v11h-12z" fill="url(#sg)" stroke="#9cbce8"/><path d="M9.500 1.500l4 4h-4z" fill="#5a90dc" stroke="#4a80d0" stroke-width="0.8"/></svg><div class="t" style="left:621px">Create</div><div class="t" style="left:658px;width:55px;text-align:center">0 %</div><div class="t" style="left:875px;width:90px;text-align:center">0h 0m</div><div class="t" style="left:965px;width:64px;text-align:center">0h 0m</div></div><div class="row" style="top:780px"><i style="left:55.0px"></i><i style="left:347.0px"></i><i style="left:422.5px"></i><i style="left:525.5px"></i><i style="left:597.5px"></i><i style="left:657.5px"></i><i style="left:712.5px"></i><i style="left:875.0px"></i><i style="left:965.0px"></i><i style="left:0"></i><b></b><div class="cb"></div><div class="t" style="left:57px">Ribbons</div><svg class="pi" viewBox="0 0 16 16"><circle cx="8" cy="8" r="7.6" fill="url(#pg)"/><circle cx="8" cy="7.6" r="3.4" fill="#fff6ea"/></svg><div class="t" style="left:370px">Normal</div><svg class="si" viewBox="0 0 15 18"><path d="M1.5 1.500h8l4 4v11h-12z" fill="url(#sg)" stroke="#9cbce8"/><path d="M9.500 1.500l4 4h-4z" fill="#5a90dc" stroke="#4a80d0" stroke-width="0.8"/></svg><div class="t" style="left:621px">Create</div><div class="t" style="left:658px;width:55px;text-align:center">0 %</div><div class="t" style="left:875px;width:90px;text-align:center">0h 0m</div><div class="t" style="left:965px;width:64px;text-align:center">0h 0m</div></div><div class="row" style="top:805px"><i style="left:55.0px"></i><i style="left:347.0px"></i><i style="left:422.5px"></i><i style="left:525.5px"></i><i style="left:597.5px"></i><i style="left:657.5px"></i><i style="left:712.5px"></i><i style="left:875.0px"></i><i style="left:965.0px"></i><i style="left:0"></i><b></b><div class="cb"></div><div class="t" style="left:57px">Balloons</div><svg class="pi" viewBox="0 0 16 16"><circle cx="8" cy="8" r="7.6" fill="url(#pg)"/><circle cx="8" cy="7.6" r="3.4" fill="#fff6ea"/></svg><div class="t" style="left:370px">Normal</div><svg class="si" viewBox="0 0 15 18"><path d="M1.5 1.500h8l4 4v11h-12z" fill="url(#sg)" stroke="#9cbce8"/><path d="M9.500 1.500l4 4h-4z" fill="#5a90dc" stroke="#4a80d0" stroke-width="0.8"/></svg><div class="t" style="left:621px">Create</div><div class="t" style="left:658px;width:55px;text-align:center">0 %</div><div class="t" style="left:875px;width:90px;text-align:center">0h 0m</div><div class="t" style="left:965px;width:64px;text-align:center">0h 0m</div></div><div class="row" style="top:830px"><i style="left:55.0px"></i><i style="left:347.0px"></i><i style="left:422.5px"></i><i style="left:525.5px"></i><i style="left:597.5px"></i><i style="left:657.5px"></i><i style="left:712.5px"></i><i style="left:875.0px"></i><i style="left:965.0px"></i><i style="left:0"></i><b></b><div class="cb"></div><div class="t" style="left:57px">Linens</div><svg class="pi" viewBox="0 0 16 16"><circle cx="8" cy="8" r="7.6" fill="url(#pg)"/><circle cx="8" cy="7.6" r="3.4" fill="#fff6ea"/></svg><div class="t" style="left:370px">Normal</div><svg class="si" viewBox="0 0 15 18"><path d="M1.5 1.500h8l4 4v11h-12z" fill="url(#sg)" stroke="#9cbce8"/><path d="M9.500 1.500l4 4h-4z" fill="#5a90dc" stroke="#4a80d0" stroke-width="0.8"/></svg><div class="t" style="left:621px">Create</div><div class="t" style="left:658px;width:55px;text-align:center">0 %</div><div class="t" style="left:875px;width:90px;text-align:center">0h 0m</div><div class="t" style="left:965px;width:64px;text-align:center">0h 0m</div></div><div class="grp" style="top:855px"><div class="pm p"></div><div class="t">Category: Postage and Shipping</div></div><div class="grp" style="top:873px"><div class="pm p"></div><div class="t">Category: Printing and Design</div></div><div class="grp" style="top:891px"><div class="pm p"></div><div class="t">Category: Recognition</div></div><div class="grp" style="top:909px"><div class="pm p"></div><div class="t">Category: Transportation</div></div><div class="a" style="left:3px;top:920px;width:1058px;height:25px;background:#ece9d8;border-top:1px solid #d8d5c5;box-sizing:border-box"></div><div class="a" style="left:72px;top:922px;width:291px;height:22px;background:#f2f0e7;border:1px solid #b9b6a5;border-right-color:#fff;border-bottom-color:#fff;box-sizing:border-box"><div class="t" style="left:4px;top:2.500px">Count: 82</div></div><div class="a" style="left:892px;top:922px;width:89px;height:22px;background:#f2f0e7;border:1px solid #b9b6a5;border-right-color:#fff;border-bottom-color:#fff;box-sizing:border-box"><div class="t" style="left:4px;top:2.500px">0h 0m</div></div><div class="a" style="left:984px;top:922px;width:59px;height:22px;background:#f2f0e7;border:1px solid #b9b6a5;border-right-color:#fff;border-bottom-color:#fff;box-sizing:border-box"><div class="t" style="left:4px;top:2.500px">0h 0m</div></div><div class="a" style="left:1045px;top:79px;width:16.500px;height:867px;background:#fbfbf8"></div><div class="a" style="left:1047px;top:79.5px;width:13px;height:14.5px;background:#c1d2fa;border-radius:2px"><svg width="13" height="15"><path d="M2.5 9.5l4-4 4 4" fill="none" stroke="#3a5a9c" stroke-width="2.2"/></svg></div><div class="a" style="left:1047px;top:96px;width:13px;height:702px;background:linear-gradient(to right,#cad9fd,#c1d2fa 50%,#b5c8f6);border-radius:2px"><div class="a" style="left:3px;top:346px;width:7px;height:9px;background:repeating-linear-gradient(to bottom,#f0f4ff 0,#f0f4ff 1.200px,rgba(0,0,0,0) 1.200px,rgba(0,0,0,0) 2.500px)"></div></div><div class="a" style="left:1047px;top:929px;width:13px;height:15px;background:#c1d2fa;border-radius:2px"><svg width="13" height="15"><path d="M2.5 5.5l4 4 4-4" fill="none" stroke="#3a5a9c" stroke-width="2.2"/></svg></div><div class="a" style="left:1061.500px;top:77.500px;width:2.200px;height:868.500px;background:#6f8ec8"></div><div class="a" style="left:0;top:947px;width:1064px;height:27px;background:linear-gradient(to bottom,#fdfdfb,#f4f3ec)"></div><div class="a" style="left:5px;top:948px;width:71px;height:24px;border:1px solid #a4b0c8;border-bottom:none;border-radius:3px 3px 0 0;background:#f8f7f2;box-sizing:border-box"><div class="t" style="left:0.500px;top:4px">Note</div></div><div class="a" style="left:75px;top:948px;width:24px;height:24px;border:1px solid #a4b0c8;border-bottom:none;border-radius:3px 3px 0 0;background:#f8f7f2;box-sizing:border-box"><div class="t" style="left:1.500px;top:4px">S…</div></div><div class="a" style="left:0;top:973.500px;width:1280px;height:1.200px;background:#aeab9c"></div><div class="a" style="left:0;top:974.700px;width:1280px;height:20px;background:linear-gradient(to bottom,#f6f5ee,#ece9d8 45%,#e6e3d0)"></div><div class="a" style="left:-1.25px;top:0;width:1px;height:1px"><div class="a" style="left:1064px;top:77px;width:216px;height:897px;background:#ece9d8"></div><div class="a" style="left:1064px;top:77px;width:2px;height:897px;background:#fbfbf8"></div><div class="ptitle" style="top:78.500px"><div class="t">Categories Bar</div></div><svg class="a" style="left:1228px;top:84px" width="48" height="13" viewBox="0 0 48 13"><g transform="translate(1.500 0)"><rect x="0.500" y="0.500" width="11" height="11" rx="1.500" fill="#2c6cd8" stroke="#1c50b8"/><rect x="3.500" y="3.500" width="5" height="5" fill="#fff"/><rect x="5" y="5" width="2" height="2" fill="#2c6cd8"/></g><path d="M20 1h7M21.500 1.500v4M25.500 1.500v4M19 6h9M23.500 6v6" stroke="#2050c0" stroke-width="1.500" fill="none"/><rect x="34.500" y="0.5" width="11" height="11" rx="1.5" fill="#e05028" stroke="#b83810"/><path d="M37 3l6 6M43 3l-6 6" stroke="#fff" stroke-width="1.8"/></svg><div class="a" style="left:1067px;top:103px;width:211px;height:27px;background:linear-gradient(to bottom,#f6f5ee,#e6e3d2)"></div><div class="grip" style="left:1069px;top:108px;height:18px;width:2px"></div><svg class="a" style="left:1079px;top:108px" width="20" height="18" viewBox="0 0 20 18"><rect x="2.500" y="4.500" width="12" height="10" fill="#fbfcfe" stroke="#d4dae8"/><path d="M2 4.200h12.500" stroke="#3c90e8" stroke-width="2"/><path d="M2 15h13" stroke="#6484bc" stroke-width="1.400"/><path d="M14.500 5v10" stroke="#b0b8cc" stroke-width="1"/><path d="M9 3h6" stroke="#38a838" stroke-width="1.800" fill="none"/><path d="M13 0l4.500 3-4.500 3z" fill="#38a838"/></svg><svg class="a" style="left:1102px;top:108px" width="20" height="18" viewBox="0 0 20 18"><path d="M1.500 3.500h6M4.500 3.500v13M4.500 7.500h3M4.500 11.500h3M4.500 15.500h3" stroke="#3a7cd8" stroke-width="1.500" fill="none"/><rect x="7.500" y="6" width="5.500" height="3" fill="#8cb8ec" stroke="#3a70c8" stroke-width="0.800"/><rect x="7.500" y="10" width="5.500" height="3" fill="#8cb8ec" stroke="#3a70c8" stroke-width="0.800"/><rect x="7.500" y="14" width="5.500" height="3" fill="#8cb8ec" stroke="#3a70c8" stroke-width="0.800"/><path d="M12 3h6M15 0v6" stroke="#38a838" stroke-width="1.900"/></svg><svg class="a" style="left:1128px;top:108px" width="20" height="18" viewBox="0 0 20 18"><rect x="2.500" y="4.500" width="12" height="10" fill="#fbfcfe" stroke="#d4dae8"/><path d="M2 4.200h12.500" stroke="#3c90e8" stroke-width="2"/><path d="M2 15h13" stroke="#6484bc" stroke-width="1.400"/><path d="M14.500 5v10" stroke="#b0b8cc" stroke-width="1"/><path d="M7 11l8-9 2.500 2-8 9-3.500 1.500z" fill="#f4bc48" stroke="#d48c28" stroke-width="0.800"/><path d="M15 2l1.500-1.500 2.500 2-1.500 1.500z" fill="#e05848"/></svg><svg class="a" style="left:1152px;top:108px" width="20" height="18" viewBox="0 0 20 18"><rect x="2.500" y="4.500" width="12" height="10" fill="#fbfcfe" stroke="#d4dae8"/><path d="M2 4.200h12.500" stroke="#3c90e8" stroke-width="2"/><path d="M2 15h13" stroke="#6484bc" stroke-width="1.400"/><path d="M14.500 5v10" stroke="#b0b8cc" stroke-width="1"/><path d="M9.500 8.500l7 7.500M16.500 8.500l-7 7.500" stroke="#e8603c" stroke-width="1.900"/></svg><svg class="a" style="left:1174.500px;top:121px" width="7" height="4"><path d="M0 0h6L3 3z" fill="#000"/></svg><div class="a" style="left:1066px;top:131px;width:212px;height:265px;background:#fff;border:1px solid #9cb4dc;box-sizing:border-box"><div class="a" style="left:0;top:0;width:210px;height:18px;background:#ece9d8;border-bottom:1px solid #d4d1c0"><i class="a" style="left:117px;top:2px;width:1px;height:13px;background:#cbc8b8;box-shadow:1px 0 0 #fff"></i><i class="a" style="left:159px;top:2px;width:1px;height:13px;background:#cbc8b8;box-shadow:1px 0 0 #fff"></i><div class="t" style="left:119px;width:42px;text-align:center;top:2.500px">UnD…</div><div class="t" style="left:163px;width:46px;text-align:center;top:2.500px">Total</div></div><div class="a" style="left:8px;top:29px;width:1px;height:216px;background:#d4d4d4"></div><div class="cat" style="top:19.5px"><em></em><svg width="18" height="17" viewBox="0 0 18 17"><path d="M0.500 15c0-6 8.500-6 8.500 0z" fill="#2c6ce0" stroke="#1c48a8" stroke-width="0.600"/><path d="M8.500 15c0-6 8.500-6 8.500 0z" fill="#2cac3c" stroke="#1c7828" stroke-width="0.600"/><circle cx="5" cy="5.500" r="3.600" fill="#f0a630" stroke="#b87010" stroke-width="0.700"/><circle cx="12.500" cy="5.500" r="3.600" fill="#e06018" stroke="#401808" stroke-width="0.700"/><path d="M9 4.500c0.500-4 6.500-4 7 0-2-1.500-5-1.500-7 0z" fill="#301408"/><path d="M3.500 12.500h3v2.500h-3zM11 12.500h3v2.500h-3z" fill="#e8f0ff" opacity="0.700"/></svg><div class="t n">Staffing</div><div class="t u">3</div><div class="t o">3</div></div><div class="cat" style="top:37.5px"><em></em><svg width="18" height="17" viewBox="0 0 18 17"><path d="M3 3.500l10.500-2.500v10l-10.500 1.500z" fill="#58b8f4" stroke="#486078" stroke-width="1.200"/><path d="M4.500 5l7.500-2v4z" fill="#a8dcfc" opacity="0.800"/><path d="M6.500 12.500h4.500l1.500 3H5z" fill="#586878"/></svg><div class="t n">Rental</div><div class="t u">19</div><div class="t o">19</div></div><div class="cat" style="top:55.5px"><em></em><svg width="18" height="17" viewBox="0 0 18 17"><rect x="3" y="3" width="11.500" height="12.500" rx="1" fill="#f2f2f0" stroke="#8c5048"/><rect x="3" y="3" width="3.500" height="12.500" fill="#c4483c"/><path d="M6 1.500v3M9 1.500v3M12 1.500v3" stroke="#686868" stroke-width="1.200"/><rect x="8" y="7.500" width="5" height="6" fill="#fff" stroke="#707070" stroke-width="0.700"/><path d="M9.500 9h2v1.500h-1.500v0.500h1.500v1.500h-2" fill="none" stroke="#303030" stroke-width="0.700"/></svg><div class="t n">Food Service</div><div class="t u">6</div><div class="t o">6</div></div><div class="cat" style="top:73.5px"><em></em><svg width="18" height="17" viewBox="0 0 18 17"><path d="M3 1v15.500" stroke="#383858" stroke-width="1.700"/><path d="M4 2.500c2 1.500 3.500 1.500 5 0v8c-1.500 1.500-3 1.500-5 0z" fill="#5c64d4" stroke="#343890" stroke-width="0.600"/><path d="M9 2.500c2-1.500 4-1.500 6 0v8c-2-1.500-4-1.500-6 0z" fill="#7c84e4" stroke="#343890" stroke-width="0.600"/></svg><div class="t n">Decorations</div><div class="t u">7</div><div class="t o">7</div></div><div class="cat" style="top:91.5px"><em></em><svg width="18" height="17" viewBox="0 0 18 17"><rect x="3" y="6" width="13" height="9" fill="#58a8e8" stroke="#2868b8"/><path d="M3 10h13M8 6v9M12 6v9" stroke="#f0f8a0" stroke-width="1"/><circle cx="5" cy="4" r="3.2" fill="none" stroke="#e03030" stroke-width="1.2"/></svg><div class="t n">Postage and</div><div class="t u">4</div><div class="t o">4</div></div><div class="cat" style="top:109.5px"><em></em><svg width="18" height="17" viewBox="0 0 18 17"><ellipse cx="9" cy="9" rx="8" ry="5.5" fill="#e8a848" stroke="#b87820"/><circle cx="5" cy="8" r="1.6" fill="#d03020"/><circle cx="9" cy="6" r="1.6" fill="#3060d0"/><circle cx="13" cy="8" r="1.6" fill="#30a030"/></svg><div class="t n">Printing and I</div><div class="t u">7</div><div class="t o">7</div></div><div class="cat" style="top:127.5px"><em></em><svg width="18" height="17" viewBox="0 0 18 17"><circle cx="8.500" cy="8.500" r="7.500" fill="url(#smg)" stroke="#c8a010" stroke-width="0.800"/><circle cx="6" cy="6.500" r="1" fill="#403010"/><circle cx="11" cy="6.500" r="1" fill="#403010"/><path d="M5 10.500c2 2.500 5 2.500 7 0" fill="none" stroke="#403010" stroke-width="1"/></svg><div class="t n">Recognition</div><div class="t u">5</div><div class="t o">5</div></div><div class="cat" style="top:145.5px"><em></em><svg width="18" height="17" viewBox="0 0 18 17"><circle cx="12" cy="5" r="3.800" fill="#f8e8a0" stroke="#c89828" stroke-width="2.400"/><circle cx="12.500" cy="4.500" r="1.300" fill="#fff"/><path d="M9.500 7.500L2.500 14.500M3.500 12l2.500 2.500" stroke="#c89828" stroke-width="3"/><path d="M9.500 7.500L2.500 14.500" stroke="#f4dc80" stroke-width="1.200"/></svg><div class="t n">Transportatio</div><div class="t u">3</div><div class="t o">3</div></div><div class="cat" style="top:163.5px"><em></em><svg width="18" height="17" viewBox="0 0 18 17"><circle cx="8.500" cy="8.500" r="7.500" fill="url(#smg)" stroke="#c8a010" stroke-width="0.800"/><circle cx="6" cy="6" r="1" fill="#403010"/><circle cx="11" cy="6" r="1" fill="#403010"/><path d="M4.500 9.500h8c-1 4-7 4-8 0z" fill="#502010"/></svg><div class="t n">Entertainmen</div><div class="t u">3</div><div class="t o">3</div></div><div class="cat" style="top:181.5px"><em></em><svg width="18" height="17" viewBox="0 0 18 17"><rect x="1.500" y="0.800" width="14.500" height="11" fill="#3ca83c" stroke="#1c6c24" stroke-width="1.100"/><path d="M2.500 11l6-8 3 4 4-3v7z" fill="#d8f0d0" opacity="0.850"/><path d="M7 5l8 10" stroke="#3868d8" stroke-width="3.200" stroke-linecap="round"/><path d="M5 2.500l3 3.500" stroke="#e8a040" stroke-width="3.200" stroke-linecap="round"/></svg><div class="t n">Audio-Visual</div><div class="t u">11</div><div class="t o">11</div></div><div class="cat" style="top:199.5px"><em></em><svg width="18" height="17" viewBox="0 0 18 17"><path d="M0.500 15c0-6 8.500-6 8.500 0z" fill="#2c6ce0" stroke="#1c48a8" stroke-width="0.600"/><path d="M8.500 15c0-6 8.500-6 8.500 0z" fill="#2cac3c" stroke="#1c7828" stroke-width="0.600"/><circle cx="5" cy="5.500" r="3.600" fill="#f0a630" stroke="#b87010" stroke-width="0.700"/><circle cx="12.500" cy="5.500" r="3.600" fill="#e06018" stroke="#401808" stroke-width="0.700"/><path d="M9 4.500c0.500-4 6.500-4 7 0-2-1.500-5-1.500-7 0z" fill="#301408"/><path d="M3.500 12.500h3v2.500h-3zM11 12.500h3v2.500h-3z" fill="#e8f0ff" opacity="0.700"/></svg><div class="t n">Publicity</div><div class="t u">6</div><div class="t o">6</div></div><div class="cat" style="top:217.5px"><em></em><svg width="18" height="17" viewBox="0 0 18 17"><path d="M1.500 4c3-2 5.500-1 7.500 1 2-2 4.500-3 7.500-1l-1.500 10c-2-1-4-1-6 1-2-2-4-2-6-1z" fill="#e4eefc" stroke="#e08850" stroke-width="1.300"/><path d="M9 5v9.500" stroke="#a8c0e8" stroke-width="1"/><path d="M4 6c1.500-0.500 3-0.300 4 0.500M4 8.500c1.500-0.500 3-0.300 4 0.500" stroke="#a8c4ec" stroke-width="0.800" fill="none"/></svg><div class="t n">Office Expen:</div><div class="t u">4</div><div class="t o">4</div></div><div class="cat" style="top:235.5px"><div class="a" style="left:19px;top:-1px;width:192px;height:18px;border:1.400px solid #282828;box-sizing:border-box;background:linear-gradient(to right,#fff 0,#fff 100px,#ece9d8 100px)"></div><em></em><svg width="18" height="17" viewBox="0 0 18 17"><path d="M2 15.500l6-7.500" stroke="#2040b0" stroke-width="1.800"/><path d="M6.500 4.500l8.500-2.500-3.500 4 2.500 0.500-7.500 4.500 1-3z" fill="#4868e0" stroke="#1830a0" stroke-width="0.900"/></svg><div class="t n">Miscellaneou</div><div class="t u">4</div><div class="t o">4</div></div></div><div class="ptitle" style="top:401px"><div class="t">Filters Bar</div></div><svg class="a" style="left:1228px;top:406px" width="48" height="13" viewBox="0 0 48 13"><g transform="translate(1.500 0)"><rect x="0.500" y="0.500" width="11" height="11" rx="1.500" fill="#2c6cd8" stroke="#1c50b8"/><rect x="3.500" y="3.500" width="5" height="5" fill="#fff"/><rect x="5" y="5" width="2" height="2" fill="#2c6cd8"/></g><path d="M20 1h7M21.500 1.500v4M25.500 1.500v4M19 6h9M23.500 6v6" stroke="#2050c0" stroke-width="1.500" fill="none"/><rect x="34.500" y="0.5" width="11" height="11" rx="1.5" fill="#e05028" stroke="#b83810"/><path d="M37 3l6 6M43 3l-6 6" stroke="#fff" stroke-width="1.8"/></svg><div class="a" style="left:1067px;top:426px;width:211px;height:27px;background:linear-gradient(to bottom,#f6f5ee,#e6e3d2)"></div><div class="grip" style="left:1070px;top:431px;height:18px;width:2px"></div><div class="a" style="left:1076.500px;top:429px;width:92px;height:20px;border:1px solid #a4b8d8;background:#ece9d8;box-sizing:border-box"><div class="t" style="left:3px;top:2px;color:#aca899">Custom</div><svg class="a" style="left:77px;top:1px" width="14" height="16"><path d="M3.5 6l3.5 3.500 3.500-3.500" fill="none" stroke="#c4c2b4" stroke-width="2"/></svg></div><svg class="a" style="left:1171px;top:429px" width="20" height="20" viewBox="0 0 20 20"><path d="M9 3h6v9H9z" fill="#eef0fa" stroke="#b0b8e0"/><path d="M3 8v6c0 3 4 3 4 0" fill="none" stroke="#7088d0" stroke-width="2"/><path d="M8 15l5-7M10 7.500l4-1-0.500 4.500" fill="none" stroke="#28a028" stroke-width="2"/></svg><svg class="a" style="left:1190px;top:436px" width="7" height="4"><path d="M0 0h6L3 3z" fill="#000"/></svg><svg class="a" style="left:1204px;top:431px" width="20" height="16" viewBox="0 0 20 16"><path d="M2 10l8-8 7 4-7 8H5z" fill="#f4f4f2" stroke="#a0a09c" stroke-width="1.2"/><path d="M4 14h12" stroke="#a0a09c"/></svg><svg class="a" style="left:1229px;top:431px" width="16" height="16" viewBox="0 0 16 16"><path d="M3 3l10 10M13 3L3 13" stroke="#b0b0ac" stroke-width="3"/></svg><svg class="a" style="left:1252px;top:442px" width="7" height="4"><path d="M0 0h6L3 3z" fill="#000"/></svg><div class="a" style="left:1066px;top:453px;width:212.500px;height:518.500px;border:1px solid #9cb4dc;box-sizing:border-box;background:#ece9d8"><div class="a" style="left:0;top:189.800px;width:210px;height:1px;background:#b4b1a2"></div><div class="fr" style="top:0.8px"><i></i><div class="t" style="width:82px;overflow:hidden">Completion</div><div class="cbx" style="left:193px;top:2px;height:16px"><svg width="14" height="16"><path d="M3.500 6l3.500 3.500 3.500-3.500" fill="none" stroke="#3a5a9c" stroke-width="2"/></svg></div></div><div class="fr" style="top:21.8px"><i></i><div class="t" style="width:82px;overflow:hidden">Due Date</div><div class="cbx" style="left:193px;top:2px;height:16px"><svg width="14" height="16"><path d="M3.500 6l3.500 3.500 3.500-3.500" fill="none" stroke="#3a5a9c" stroke-width="2"/></svg></div></div><div class="fr" style="top:42.8px"><i></i><div class="t" style="width:82px;overflow:hidden">Status</div><div class="cbx" style="left:193px;top:2px;height:16px"><svg width="14" height="16"><path d="M3.500 6l3.500 3.500 3.500-3.500" fill="none" stroke="#3a5a9c" stroke-width="2"/></svg></div></div><div class="fr" style="top:63.8px"><i></i><div class="t" style="width:82px;overflow:hidden">Priority</div><div class="cbx" style="left:193px;top:2px;height:16px"><svg width="14" height="16"><path d="M3.500 6l3.500 3.500 3.500-3.500" fill="none" stroke="#3a5a9c" stroke-width="2"/></svg></div></div><div class="fr" style="top:84.8px"><i></i><div class="t" style="width:82px;overflow:hidden">Task Name</div></div><div class="fr" style="top:105.8px"><i></i><div class="t" style="width:82px;overflow:hidden">Date Created</div><div class="cbx" style="left:193px;top:2px;height:16px"><svg width="14" height="16"><path d="M3.500 6l3.500 3.500 3.500-3.500" fill="none" stroke="#3a5a9c" stroke-width="2"/></svg></div></div><div class="fr" style="top:126.8px"><i></i><div class="t" style="width:82px;overflow:hidden">Date Last Modifie</div><div class="cbx" style="left:193px;top:2px;height:16px"><svg width="14" height="16"><path d="M3.500 6l3.500 3.500 3.500-3.500" fill="none" stroke="#3a5a9c" stroke-width="2"/></svg></div></div><div class="fr" style="top:147.8px"><i></i><div class="t" style="width:82px;overflow:hidden">Date Opened</div><div class="cbx" style="left:193px;top:2px;height:16px"><svg width="14" height="16"><path d="M3.500 6l3.500 3.500 3.500-3.500" fill="none" stroke="#3a5a9c" stroke-width="2"/></svg></div></div><div class="fr" style="top:168.8px"><i></i><div class="t" style="width:82px;overflow:hidden">Date Completed</div><div class="cbx" style="left:193px;top:2px;height:16px"><svg width="14" height="16"><path d="M3.500 6l3.500 3.500 3.500-3.500" fill="none" stroke="#3a5a9c" stroke-width="2"/></svg></div></div></div></div></div></body></html>
